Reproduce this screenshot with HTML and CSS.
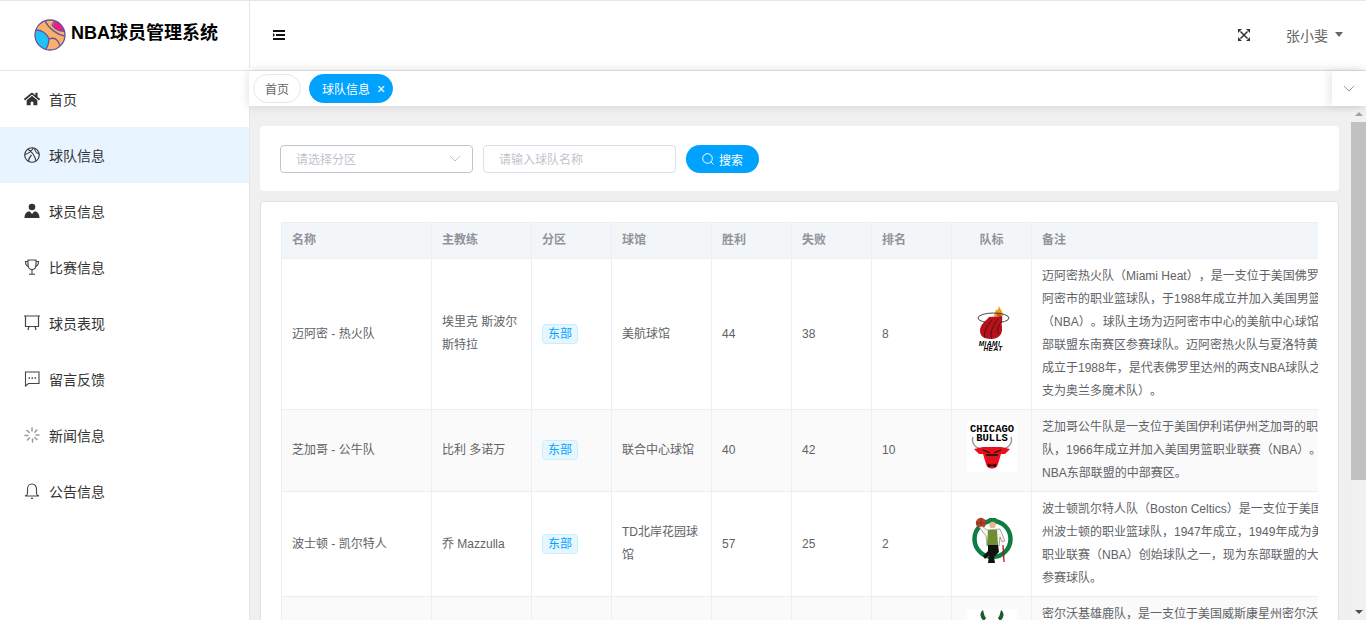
FILE: index.html
```html
<!DOCTYPE html>
<html lang="zh-CN">
<head>
    <meta charset="UTF-8">
    <title>NBA球员管理系统</title>
    <link rel="stylesheet" href="styles.css">
</head>
<body>

    <header class="header">
        <div class="brand">
            <svg class="brand-logo" viewBox="0 0 32 32">
                <circle cx="16" cy="16" r="15" fill="#fbb067"/>
                <path d="M21 2 C25 3 29 7 30.500 12 C26 13 21 10 19 7 Z" fill="#ee1d82"/>
                <path d="M2 12 C7 11 13 14 15 20 C15 24 14 27 12 30.500 C6 29 2 23 1 16 Z" fill="#1cc3f6"/>
                <g fill="none" stroke="#6650a6" stroke-width="1.300">
                    <circle cx="16" cy="16" r="15"/>
                    <path d="M11 2 C15 10 24 16 30.500 17"/>
                    <path d="M21 2 C18 4 18 7 19 7 C21 10 26 13 30.500 12"/>
                    <path d="M2 11 C7 11 13 14 15 20 C15 24 14 27 12 30.500"/>
                    <path d="M15 20 C20 18 24 20 26 27"/>
                </g>
            </svg>
            <span class="brand-name">NBA球员管理系统</span>
        </div>
        <div class="topbar">
            <svg class="fold-icon" viewBox="0 0 12 10">
                <path d="M0 0H12V2H0Z M3 4H12V6H3Z M0 8H12V10H0Z M0 3L2 5L0 7Z" fill="#111"/>
            </svg>
            <div class="topbar-right">
                <svg class="full-icon" viewBox="0 0 12 12">
                    <path d="M2.500 2.500L9.500 9.500M9.500 2.500L2.500 9.500" stroke="#333" stroke-width="1.500"/>
                    <path d="M0 0H4L0 4Z M12 0V4L8 0Z M0 12V8L4 12Z M12 12H8L12 8Z" fill="#333"/>
                </svg>
                <span class="user">张小斐</span>
                <span class="caret"></span>
            </div>
        </div>
    </header>

    <div class="layout">
        <nav class="sidebar">
            <a class="menu-item">
                <svg class="menu-icon" viewBox="0 0 576 512"><path fill="#333" d="M280.370 148.260L96 300.110V464a16 16 0 0 0 16 16l112.060-.29a16 16 0 0 0 15.920-16V368a16 16 0 0 1 16-16h64a16 16 0 0 1 16 16v95.640a16 16 0 0 0 16 16.050L464 480a16 16 0 0 0 16-16V300L295.670 148.260a12.190 12.190 0 0 0-15.300 0zM571.600 251.470L488 182.560V44.050a12 12 0 0 0-12-12h-56a12 12 0 0 0-12 12v72.610L318.470 43a48 48 0 0 0-61 0L4.340 251.470a12 12 0 0 0-1.600 16.900l25.500 31A12 12 0 0 0 45.150 301l235.220-193.740a12.190 12.190 0 0 1 15.300 0L530.900 301a12 12 0 0 0 16.900-1.600l25.500-31a12 12 0 0 0-1.700-16.930z"/></svg>
                首页
            </a>
            <a class="menu-item active">
                <svg class="menu-icon" viewBox="0 0 16 16" fill="none" stroke="#333" stroke-width="1.100">
                    <circle cx="8" cy="8" r="7.300"/>
                    <path d="M3.500 2.300C7 3.500 11 8.500 12 14M9.500 1C8 3 6.500 6 1 7.500M7.500 8C5.500 10 4.500 12 4.500 14.200M10.500 1.500C11 4 12.500 6 15 7"/>
                </svg>
                球队信息
            </a>
            <a class="menu-item">
                <svg class="menu-icon" viewBox="0 0 16 16">
                    <circle cx="8" cy="4" r="3.300" fill="#333"/>
                    <path d="M0.500 15C0.500 10.500 3 8.500 5.500 8.200L8 11L10.500 8.200C13 8.500 15.500 10.500 15.500 15Z" fill="#333"/>
                </svg>
                球员信息
            </a>
            <a class="menu-item">
                <svg class="menu-icon" viewBox="0 0 16 16" fill="none" stroke="#444" stroke-width="1.100">
                    <path d="M4 1H12V6C12 9 10 10.500 8 10.500C6 10.500 4 9 4 6Z"/>
                    <path d="M4 2.500H1.500C1.500 5.500 2.500 7 5 7.500M12 2.500H14.500C14.500 5.500 13.500 7 11 7.500M8 10.500V15M5 15.300H11"/>
                </svg>
                比赛信息
            </a>
            <a class="menu-item">
                <svg class="menu-icon" viewBox="0 0 16 16" fill="none" stroke="#444" stroke-width="1.200">
                    <path d="M0 1H16M1.500 1V11.500H14.500V1M5 11.500L4 15M11 11.500L12 15"/>
                </svg>
                球员表现
            </a>
            <a class="menu-item">
                <svg class="menu-icon" viewBox="0 0 16 16" fill="none" stroke="#444" stroke-width="1.100">
                    <path d="M1.500 1H15V12.500H4.500L1.500 15Z"/>
                    <path d="M4.500 7H6M7.500 7H9M10.500 7H12" stroke-width="1.300"/>
                </svg>
                留言反馈
            </a>
            <a class="menu-item">
                <svg class="menu-icon" viewBox="0 0 16 16" fill="none" stroke="#999" stroke-width="1.500" stroke-linecap="round">
                    <path d="M8 1V4M12.800 3L10.800 5.300M15 8H12M13 12.500L10.800 10.500M8.500 15V12M3.500 13L5.500 10.800M1 8.500H4M3 3.500L5.200 5.500"/>
                </svg>
                新闻信息
            </a>
            <a class="menu-item">
                <svg class="menu-icon" viewBox="0 0 16 16" fill="none" stroke="#444" stroke-width="1.100">
                    <path d="M8 1C5 1 3.500 3.500 3.500 6V10.500C3.500 11.500 2.500 12.500 1 13H15C13.500 12.500 12.500 11.500 12.500 10.500V6C12.500 3.500 11 1 8 1Z"/>
                    <path d="M7 15.300H9" stroke-width="1.200"/>
                </svg>
                公告信息
            </a>
        </nav>

        <div class="content">
            <div class="tabs">
                <span class="tab">首页</span>
                <span class="tab tab-active">球队信息<i class="tab-close">×</i></span>
                <div class="tabs-more">
                    <svg viewBox="0 0 12 7" class="tabs-more-icon"><path d="M1 1L6 6L11 1" fill="none" stroke="#999"/></svg>
                </div>
            </div>

            <div class="main">
                <div class="page">
                    <div class="search-card">
                        <div class="select">
                            <span>请选择分区</span>
                            <svg viewBox="0 0 12 7" class="select-arrow"><path d="M1 1L6 6L11 1" fill="none" stroke="#c0c4cc"/></svg>
                        </div>
                        <div class="input">请输入球队名称</div>
                        <button class="search-btn">
                            <svg viewBox="0 0 12 12" class="search-icon" fill="none" stroke="#fff" stroke-width="1">
                                <circle cx="5.500" cy="5.500" r="4.800"/>
                                <path d="M9 9L11.500 11.500"/>
                            </svg>
                            搜索
                        </button>
                    </div>

                    <div class="table-card">
                        <div class="table-wrap">
                            <table class="team-table">
                                <colgroup>
                                    <col class="col-150">
                                    <col class="col-100">
                                    <col class="col-80">
                                    <col class="col-100">
                                    <col class="col-80">
                                    <col class="col-80">
                                    <col class="col-80">
                                    <col class="col-80">
                                    <col class="col-note">
                                </colgroup>
                                <thead>
                                    <tr>
                                        <th>名称</th>
                                        <th>主教练</th>
                                        <th>分区</th>
                                        <th>球馆</th>
                                        <th>胜利</th>
                                        <th>失败</th>
                                        <th>排名</th>
                                        <th class="center">队标</th>
                                        <th>备注</th>
                                    </tr>
                                </thead>
                                <tbody>
                                    <tr>
                                        <td>迈阿密 - 热火队</td>
                                        <td>埃里克 斯波尔斯特拉</td>
                                        <td><span class="tag">东部</span></td>
                                        <td>美航球馆</td>
                                        <td>44</td>
                                        <td>38</td>
                                        <td>8</td>
                                        <td class="center">
                                            <svg class="team-logo" viewBox="0 0 50 50">
                                                <path d="M27 11C27 8 29 7 29 4C30 6 31 6 32 1C33 4 36 6 36 11Z" fill="#f39a1f"/>
                                                <path d="M30 7L32 9L33 7L34 11H30Z" fill="#b8691a"/>
                                                <ellipse cx="26.500" cy="13" rx="15.500" ry="5" fill="none" stroke="#333" stroke-width="0.900"/>
                                                <path d="M13 26C13 19 19 16 22 12L35 11C36 15 34 17 35 22C36 30 31 34 24 34C17 34 13 31 13 26Z" fill="#b5121b"/>
                                                <path d="M18 33C16 27 20 21 25 15M25 34C22 28 26 21 31 14M32 29C30 27 30 21 35 16" fill="none" stroke="#4a0a0e" stroke-width="0.800"/>
                                                <text x="22.500" y="40.500" class="logo-heat">MIAMI</text>
                                                <text x="26" y="46" class="logo-heat">HEAT</text>
                                            </svg>
                                        </td>
                                        <td class="note">迈阿密热火队（Miami Heat），是一支位于美国佛罗里达州迈<br>阿密市的职业篮球队，于1988年成立并加入美国男篮职业联赛<br>（NBA）。球队主场为迈阿密市中心的美航中心球馆，现属东<br>部联盟东南赛区参赛球队。迈阿密热火队与夏洛特黄蜂队同年<br>成立于1988年，是代表佛罗里达州的两支NBA球队之一，另一<br>支为奥兰多魔术队）。</td>
                                    </tr>
                                    <tr>
                                        <td>芝加哥 - 公牛队</td>
                                        <td>比利 多诺万</td>
                                        <td><span class="tag">东部</span></td>
                                        <td>联合中心球馆</td>
                                        <td>40</td>
                                        <td>42</td>
                                        <td>10</td>
                                        <td class="center">
                                            <svg class="team-logo" viewBox="0 0 50 50">
                                                <rect width="50" height="50" fill="#fff"/>
                                                <text x="25" y="10" class="logo-bulls">CHICAGO</text>
                                                <text x="25" y="19" class="logo-bulls">BULLS</text>
                                                <path d="M6 15C4 21 8 26 15 27M44 15C46 21 42 26 35 27" fill="none" stroke="#999" stroke-width="1.500"/>
                                                <path d="M7 27L16 25H34L43 27L38 32L34 32L31 42C30 48 20 48 19 42L16 32L12 32Z" fill="#e5101a"/>
                                                <path d="M16 28L23 31M34 28L27 31M19 33H31M21 42C23 44 27 44 29 42" fill="none" stroke="#111" stroke-width="1.300"/>
                                                <circle cx="22" cy="44" r="1.100" fill="#111"/>
                                                <circle cx="28" cy="44" r="1.100" fill="#111"/>
                                            </svg>
                                        </td>
                                        <td class="note">芝加哥公牛队是一支位于美国伊利诺伊州芝加哥的职业篮球<br>队，1966年成立并加入美国男篮职业联赛（NBA）。现属<br>NBA东部联盟的中部赛区。</td>
                                    </tr>
                                    <tr>
                                        <td>波士顿 - 凯尔特人</td>
                                        <td>乔 Mazzulla</td>
                                        <td><span class="tag">东部</span></td>
                                        <td>TD北岸花园球馆</td>
                                        <td>57</td>
                                        <td>25</td>
                                        <td>2</td>
                                        <td class="center">
                                            <svg class="team-logo" viewBox="0 0 50 50">
                                                <circle cx="25.500" cy="24" r="18" fill="#fff" stroke="#0c7d43" stroke-width="4.500"/>
                                                <circle cx="14" cy="8" r="5.200" fill="#b5432a"/>
                                                <path d="M9 8H19M14 3V13" stroke="#5a1d10" stroke-width="0.500"/>
                                                <path d="M22 3H29L31 7H20Z" fill="#1f7a3e"/>
                                                <circle cx="25.500" cy="10" r="3.200" fill="#e2b98f"/>
                                                <path d="M12 12L15 11L20 15L33 14L38 26L35 27L33 22L32 31H20L19 21Z" fill="#f4f4ee" stroke="#555" stroke-width="0.500"/>
                                                <path d="M21 15H30L31 30H20Z" fill="#6f8f2e"/>
                                                <path d="M21 30H31L32 37L27 42L28 48H21L22 40L18 44L16 41L21 36Z" fill="#111"/>
                                                <path d="M36 30L37 47" stroke="#b5121b" stroke-width="1.300"/>
                                            </svg>
                                        </td>
                                        <td class="note">波士顿凯尔特人队（Boston Celtics）是一支位于美国马萨诸塞<br>州波士顿的职业篮球队，1947年成立，1949年成为美国男篮<br>职业联赛（NBA）创始球队之一，现为东部联盟的大西洋赛区<br>参赛球队。</td>
                                    </tr>
                                    <tr>
                                        <td>密尔沃基 - 雄鹿队</td>
                                        <td>多克 里弗斯</td>
                                        <td><span class="tag">东部</span></td>
                                        <td>费哲论坛球馆</td>
                                        <td>49</td>
                                        <td>33</td>
                                        <td>3</td>
                                        <td class="center">
                                            <svg class="team-logo" viewBox="0 0 50 50">
                                                <rect width="50" height="50" fill="#fff"/>
                                                <path d="M16 1C12 4 13 9 17 12L19 9C17 7 17 4 16 1ZM34 1C38 4 37 9 33 12L31 9C33 7 33 4 34 1Z" fill="#1e5a32"/>
                                                <path d="M19 12H31L29 34L25 40L21 34Z" fill="#1e5a32"/>
                                            </svg>
                                        </td>
                                        <td class="note">密尔沃基雄鹿队，是一支位于美国威斯康星州密尔沃基的职业<br>篮球队，1968年成立，现为东部联盟中部赛区的参赛球队，<br>主场位于费哲论坛球馆。</td>
                                    </tr>
                                </tbody>
                            </table>
                        </div>
                    </div>
                </div>

                <div class="scrollbar">
                    <div class="scroll-btn"><span class="arrow-up"></span></div>
                    <div class="scroll-track"><div class="scroll-thumb"></div></div>
                    <div class="scroll-btn"><span class="arrow-down"></span></div>
                </div>
            </div>
        </div>
    </div>

</body>
</html>
```

FILE: styles.css
```css
* {
    margin: 0;
    padding: 0;
    box-sizing: border-box;
}

body {
    height: 100vh;
    overflow: hidden;
    display: flex;
    flex-direction: column;
    font-family: "Liberation Sans", "Noto Sans CJK SC", sans-serif;
    font-size: 12px;
    color: #333;
    background: #fff;
    text-spacing-trim: space-all;
}

/* Header */
.header {
    height: 71px;
    flex: none;
    display: flex;
    border-top: 1px solid #e6e6e6;
    border-bottom: 1px solid #e6e6e6;
}

.brand {
    width: 250px;
    height: 67px;
    flex: none;
    display: flex;
    align-items: center;
    padding-left: 34px;
    border-right: 1px solid #e6e6e6;
}

.brand-logo {
    width: 32px;
    height: 32px;
    margin-right: 5px;
}

.brand-name {
    padding-bottom: 8px;
    font-size: 18px;
    font-weight: bold;
    color: #000;
}

.topbar {
    flex: 1;
    display: flex;
    align-items: center;
    justify-content: space-between;
    padding: 0 23px 2px;
}

.fold-icon {
    width: 12px;
    height: 10px;
}

.topbar-right {
    display: flex;
    align-items: center;
}

.full-icon {
    width: 12px;
    height: 12px;
    margin-right: 36px;
}

.user {
    font-size: 14px;
    color: #666;
}

.caret {
    width: 0;
    height: 0;
    margin-left: 7px;
    border-style: solid;
    border-width: 5px 4px 0;
    border-color: #666 transparent transparent;
}

/* Body */
.layout {
    flex: 1;
    min-height: 0;
    display: flex;
}

.sidebar {
    width: 250px;
    flex: none;
    border-right: 1px solid #e6e6e6;
}

.menu-item {
    height: 56px;
    display: flex;
    align-items: center;
    padding-left: 24px;
    font-size: 14px;
    color: #333;
}

.menu-item.active {
    background: #e8f4ff;
}

.menu-icon {
    width: 16px;
    height: 16px;
    margin-right: 9px;
}

.content {
    flex: 1;
    min-width: 0;
    display: flex;
    flex-direction: column;
}

/* Tabs */
.tabs {
    height: 35px;
    flex: none;
    margin-left: -1px;
    display: flex;
    align-items: center;
    padding-left: 4px;
    gap: 8px;
    background: #fff;
    box-shadow: 0 0 10px rgba(0, 0, 0, 0.14);
    position: relative;
    z-index: 2;
}

.tab {
    height: 29px;
    padding: 0 11px;
    display: flex;
    align-items: center;
    border: 1px solid #e6e6e6;
    border-radius: 15px;
    color: #666;
}

.tab-active {
    padding: 0 7px 0 12px;
    background: #00a2ff;
    border-color: #00a2ff;
    color: #fff;
}

.tab-close {
    font-style: normal;
    font-size: 14px;
    margin-left: 7px;
}

.tabs-more {
    width: 34px;
    height: 35px;
    margin-left: auto;
    display: flex;
    align-items: center;
    justify-content: center;
    box-shadow: -4px 0 8px rgba(0, 0, 0, 0.08);
    background: #fff;
}

.tabs-more-icon {
    width: 12px;
    height: 7px;
}

/* Main area */
.main {
    flex: 1;
    min-height: 0;
    display: flex;
    background: #f0f0f0;
}

.page {
    flex: 1;
    min-width: 0;
    overflow: hidden;
    padding: 20px 12px 0 10px;
}

.search-card {
    height: 65px;
    display: flex;
    align-items: center;
    gap: 10px;
    padding: 1px 20px 0;
    background: #fff;
    border-radius: 4px;
}

.select,
.input {
    width: 193px;
    height: 28px;
    display: flex;
    align-items: center;
    justify-content: space-between;
    padding: 0 15px 2px;
    border: 1px solid #dcdfe6;
    border-radius: 4px;
    color: #c0c4cc;
    background: #fff;
}

.select {
    border-color: #c0c4cc;
    padding-right: 11px;
}

.select-arrow {
    width: 12px;
    height: 7px;
}

.search-btn {
    width: 73px;
    height: 28px;
    display: flex;
    align-items: center;
    justify-content: center;
    gap: 5px;
    border: none;
    border-radius: 14px;
    background: #00a2ff;
    color: #fff;
    font-family: inherit;
    font-size: 12px;
}

.search-icon {
    width: 12px;
    height: 12px;
}

.table-card {
    margin-top: 10px;
    padding: 20px;
    background: #fff;
    border: 1px solid #e0e0e0;
    border-radius: 4px;
}

.table-wrap {
    overflow: hidden;
    border-top: 1px solid #ebeef5;
    border-left: 1px solid #ebeef5;
}

.team-table {
    width: 1150px;
    table-layout: fixed;
    border-collapse: separate;
    border-spacing: 0;
}

.col-150 {
    width: 150px;
}

.col-100 {
    width: 100px;
}

.col-80 {
    width: 80px;
}

.col-note {
    width: 400px;
}

.team-table th,
.team-table td {
    padding: 6px 10px;
    border-right: 1px solid #ebeef5;
    border-bottom: 1px solid #ebeef5;
    line-height: 23px;
    text-align: left;
    font-size: 12px;
}

.team-table th {
    height: 36px;
    background: #f3f6f9;
    color: #909399;
    font-weight: bold;
}

.team-table td {
    color: #606266;
}

.team-table .center {
    text-align: center;
}

.team-table tbody tr:nth-child(even) td {
    background: #fafafa;
}

.team-table .note {
    white-space: nowrap;
}

.tag {
    display: inline-block;
    height: 20px;
    padding: 0 5px;
    line-height: 18px;
    color: #00a2ff;
    background: #e6f6ff;
    border: 1px solid #ccecff;
    border-radius: 4px;
}

.team-logo {
    width: 50px;
    height: 50px;
}

.logo-heat {
    font-family: "Liberation Sans", sans-serif;
    font-size: 6.500px;
    font-weight: bold;
    font-style: italic;
    letter-spacing: 0.500px;
    text-anchor: middle;
    fill: #000;
}

.logo-bulls {
    font-family: "Liberation Mono", monospace;
    font-size: 10.500px;
    font-weight: bold;
    text-anchor: middle;
    fill: #000;
}

/* Page scrollbar */
.scrollbar {
    width: 15px;
    flex: none;
    display: flex;
    flex-direction: column;
    background: #f1f1f1;
}

.scroll-btn {
    height: 16px;
    flex: none;
    display: flex;
    align-items: center;
    justify-content: center;
}

.arrow-up {
    border-style: solid;
    border-width: 0 4px 4px;
    border-color: transparent transparent #a3a3a3;
}

.arrow-down {
    border-style: solid;
    border-width: 4px 4px 0;
    border-color: #505050 transparent transparent;
}

.scroll-track {
    flex: 1;
}

.scroll-thumb {
    height: 358px;
    background: #c1c1c1;
}
```
